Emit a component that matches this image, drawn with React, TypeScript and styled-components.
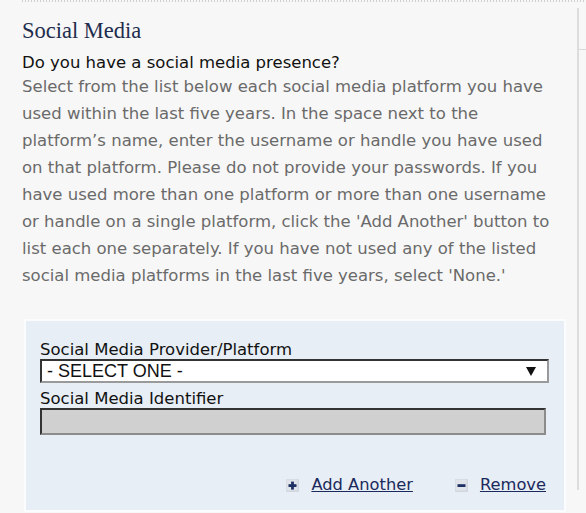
import React from "react";
import styled, { createGlobalStyle } from "styled-components";

const GlobalStyle = createGlobalStyle`
  html, body {
    margin: 0;
    padding: 0;
    background: #f7f7f7;
  }
  * { box-sizing: border-box; }
`;

const Page = styled.div`
  width: 586px;
  height: 513px;
  overflow: hidden;
  padding-left: 22px;
  background: #f7f7f7;
`;

const TopRule = styled.div`
  height: 2px;
  background: repeating-linear-gradient(to right, #cfcfcf 0 1px, transparent 1px 3px);
`;

const Row = styled.div`
  display: flex;
`;

const Main = styled.div`
  width: 555px;
  flex: none;
`;

const Divider = styled.div`
  width: 2px;
  height: 482px;
  margin-top: 6px;
  background: #dcdcdc;
  flex: none;
`;

const Side = styled.div`
  flex: 1;
`;

const SideRule = styled.div`
  margin-top: 47px;
  height: 1px;
  background: #d9d9d9;
`;

const Title = styled.h2`
  margin: 16px 0 0;
  font-family: "Liberation Serif", "Times New Roman", serif;
  font-weight: normal;
  font-size: 22.5px;
  line-height: 26px;
  color: #1f2d4e;
`;

const Question = styled.div`
  margin-top: 8px;
  font-family: "DejaVu Sans", Verdana, sans-serif;
  font-size: 16.5px;
  line-height: 21px;
  color: #111;
`;

const Help = styled.p`
  margin: 0;
  font-family: "DejaVu Sans", Verdana, sans-serif;
  font-size: 16.5px;
  line-height: 27px;
  color: #6a6a6a;
  white-space: nowrap;
`;

const Panel = styled.div`
  margin: 30px 0 0 2px;
  width: 542px;
  border: 2px solid #fbfcfd;
  background: #e8eef5;
  padding: 20px 18px 15px 14px;
`;

const FieldLabel = styled.label<{ $gap?: number }>`
  display: block;
  margin-top: ${(p) => p.$gap ?? 0}px;
  font-family: "DejaVu Sans", Verdana, sans-serif;
  font-size: 16.5px;
  line-height: 18px;
  color: #111;
`;

const SelectBox = styled.div`
  width: 509px;
  height: 24px;
  background: #fff;
  border-style: solid;
  border-width: 2px;
  border-color: #333 #9a9a9a #9a9a9a #333;
  display: flex;
  align-items: center;
  justify-content: space-between;
  padding: 0 11px 0 5px;
  font-family: "Liberation Sans", Arial, sans-serif;
  font-size: 18px;
  color: #111;
`;

const TextField = styled.div`
  width: 506px;
  height: 27px;
  background: #d0d0d0;
  border-style: solid;
  border-width: 2px;
  border-color: #333 #8c8c8c #8c8c8c #333;
`;

const Actions = styled.div`
  margin-top: 40px;
  display: flex;
  justify-content: flex-end;
  align-items: center;
  gap: 42px;
`;

const ActionLink = styled.a`
  display: flex;
  align-items: center;
  gap: 12px;
  font-family: "DejaVu Sans", Verdana, sans-serif;
  font-size: 16.3px;
  line-height: 20px;
  color: #1b2a5c;
  text-decoration: underline;
  cursor: pointer;
`;

const Arrow = () => (
  <svg width="10" height="10" viewBox="0 0 10 10">
    <polygon points="0,1 10,1 5,10" fill="#111" />
  </svg>
);

const IconBox = ({ plus }: { plus?: boolean }) => (
  <svg width="13" height="13" viewBox="0 0 13 13">
    <rect x="0" y="0" width="13" height="13" rx="1" fill="#d1d6de" />
    <rect x="0.5" y="0.5" width="11" height="11" fill="#e0e4ea" />
    <rect x="2.5" y="5.2" width="8" height="2.8" fill="#1d3063" />
    {plus && <rect x="5.1" y="2.6" width="2.8" height="8" fill="#1d3063" />}
  </svg>
);

const lines = [
  "Select from the list below each social media platform you have",
  "used within the last five years. In the space next to the",
  "platform\u2019s name, enter the username or handle you have used",
  "on that platform. Please do not provide your passwords. If you",
  "have used more than one platform or more than one username",
  "or handle on a single platform, click the 'Add Another' button to",
  "list each one separately. If you have not used any of the listed",
  "social media platforms in the last five years, select 'None.'",
];

export default function App() {
  return (
    <>
      <GlobalStyle />
      <Page>
        <TopRule />
        <Row>
          <Main>
            <Title>Social Media</Title>
            <Question>Do you have a social media presence?</Question>
            <Help>
              {lines.map((l, i) => (
                <React.Fragment key={i}>
                  {l}
                  {i < lines.length - 1 && <br />}
                </React.Fragment>
              ))}
            </Help>
            <Panel>
              <FieldLabel>Social Media Provider/Platform</FieldLabel>
              <SelectBox>
                <span>- SELECT ONE -</span>
                <Arrow />
              </SelectBox>
              <FieldLabel $gap={7}>Social Media Identifier</FieldLabel>
              <TextField />
              <Actions>
                <ActionLink>
                  <IconBox plus />
                  <span>Add Another</span>
                </ActionLink>
                <ActionLink>
                  <IconBox />
                  <span>Remove</span>
                </ActionLink>
              </Actions>
            </Panel>
          </Main>
          <Divider />
          <Side>
            <SideRule />
          </Side>
        </Row>
      </Page>
    </>
  );
}
